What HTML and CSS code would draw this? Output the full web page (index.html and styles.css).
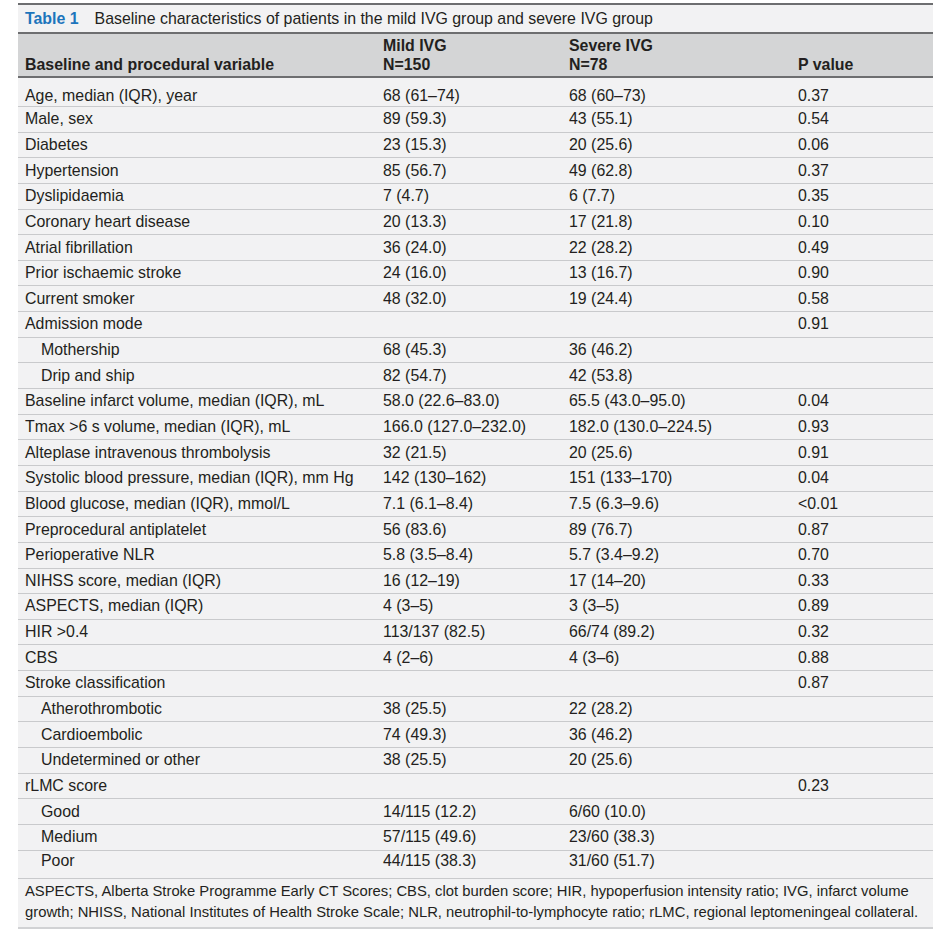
FILE: index.html
```html
<!DOCTYPE html>
<html lang="en">
<head>
<meta charset="utf-8">
<title>Table 1</title>
<link rel="stylesheet" href="styles.css">
</head>
<body>
<div class="table-wrap">
  <div class="caption"><span class="label">Table 1</span><span class="caption-text">Baseline characteristics of patients in the mild IVG group and severe IVG group</span></div>
  <table class="data">
    <colgroup>
      <col class="c1"><col class="c2"><col class="c3"><col class="c4">
    </colgroup>
    <thead>
      <tr>
        <th>Baseline and procedural variable</th>
        <th>Mild IVG<br>N=150</th>
        <th>Severe IVG<br>N=78</th>
        <th>P value</th>
      </tr>
    </thead>
    <tbody>
      <tr class="first"><td>Age, median (IQR), year</td><td>68 (61–74)</td><td>68 (60–73)</td><td>0.37</td></tr>
      <tr><td>Male, sex</td><td>89 (59.3)</td><td>43 (55.1)</td><td>0.54</td></tr>
      <tr><td>Diabetes</td><td>23 (15.3)</td><td>20 (25.6)</td><td>0.06</td></tr>
      <tr><td>Hypertension</td><td>85 (56.7)</td><td>49 (62.8)</td><td>0.37</td></tr>
      <tr><td>Dyslipidaemia</td><td>7 (4.7)</td><td>6 (7.7)</td><td>0.35</td></tr>
      <tr><td>Coronary heart disease</td><td>20 (13.3)</td><td>17 (21.8)</td><td>0.10</td></tr>
      <tr><td>Atrial fibrillation</td><td>36 (24.0)</td><td>22 (28.2)</td><td>0.49</td></tr>
      <tr><td>Prior ischaemic stroke</td><td>24 (16.0)</td><td>13 (16.7)</td><td>0.90</td></tr>
      <tr><td>Current smoker</td><td>48 (32.0)</td><td>19 (24.4)</td><td>0.58</td></tr>
      <tr><td>Admission mode</td><td></td><td></td><td>0.91</td></tr>
      <tr><td class="sub">Mothership</td><td>68 (45.3)</td><td>36 (46.2)</td><td></td></tr>
      <tr><td class="sub">Drip and ship</td><td>82 (54.7)</td><td>42 (53.8)</td><td></td></tr>
      <tr><td>Baseline infarct volume, median (IQR), mL</td><td>58.0 (22.6–83.0)</td><td>65.5 (43.0–95.0)</td><td>0.04</td></tr>
      <tr><td>Tmax &gt;6 s volume, median (IQR), mL</td><td>166.0 (127.0–232.0)</td><td>182.0 (130.0–224.5)</td><td>0.93</td></tr>
      <tr><td>Alteplase intravenous thrombolysis</td><td>32 (21.5)</td><td>20 (25.6)</td><td>0.91</td></tr>
      <tr><td>Systolic blood pressure, median (IQR), mm Hg</td><td>142 (130–162)</td><td>151 (133–170)</td><td>0.04</td></tr>
      <tr><td>Blood glucose, median (IQR), mmol/L</td><td>7.1 (6.1–8.4)</td><td>7.5 (6.3–9.6)</td><td>&lt;0.01</td></tr>
      <tr><td>Preprocedural antiplatelet</td><td>56 (83.6)</td><td>89 (76.7)</td><td>0.87</td></tr>
      <tr><td>Perioperative NLR</td><td>5.8 (3.5–8.4)</td><td>5.7 (3.4–9.2)</td><td>0.70</td></tr>
      <tr><td>NIHSS score, median (IQR)</td><td>16 (12–19)</td><td>17 (14–20)</td><td>0.33</td></tr>
      <tr><td>ASPECTS, median (IQR)</td><td>4 (3–5)</td><td>3 (3–5)</td><td>0.89</td></tr>
      <tr><td>HIR &gt;0.4</td><td>113/137 (82.5)</td><td>66/74 (89.2)</td><td>0.32</td></tr>
      <tr><td>CBS</td><td>4 (2–6)</td><td>4 (3–6)</td><td>0.88</td></tr>
      <tr><td>Stroke classification</td><td></td><td></td><td>0.87</td></tr>
      <tr><td class="sub">Atherothrombotic</td><td>38 (25.5)</td><td>22 (28.2)</td><td></td></tr>
      <tr><td class="sub">Cardioembolic</td><td>74 (49.3)</td><td>36 (46.2)</td><td></td></tr>
      <tr><td class="sub">Undetermined or other</td><td>38 (25.5)</td><td>20 (25.6)</td><td></td></tr>
      <tr><td>rLMC score</td><td></td><td></td><td>0.23</td></tr>
      <tr><td class="sub">Good</td><td>14/115 (12.2)</td><td>6/60 (10.0)</td><td></td></tr>
      <tr><td class="sub">Medium</td><td>57/115 (49.6)</td><td>23/60 (38.3)</td><td></td></tr>
      <tr class="last"><td class="sub">Poor</td><td>44/115 (38.3)</td><td>31/60 (51.7)</td><td></td></tr>
    </tbody>
  </table>
  <div class="footnote">ASPECTS, Alberta Stroke Programme Early CT Scores; CBS, clot burden score; HIR, hypoperfusion intensity ratio; IVG, infarct volume<br>growth; NHISS, National Institutes of Health Stroke Scale; NLR, neutrophil-to-lymphocyte ratio; rLMC, regional leptomeningeal collateral.</div>
</div>
</body>
</html>
```

FILE: styles.css
```css
html, body {
  margin: 0;
  padding: 0;
  background: #ffffff;
}

body {
  font-family: "Liberation Sans", Arial, Helvetica, sans-serif;
  color: #231f20;
}

.table-wrap {
  margin: 3px 0 0 18px;
  width: 915px;
  background: #f2f2f3;
  border-top: 2px solid #6d6e70;
  border-bottom: 2px solid #d1d2d4;
}

.caption {
  height: 27px;
  padding-left: 7px;
  font-size: 15.9px;
  line-height: 27px;
  white-space: nowrap;
}

.caption .label {
  color: #1c75bc;
  font-weight: bold;
  margin-right: 16px;
}

.data {
  width: 100%;
  border-collapse: collapse;
  table-layout: fixed;
  font-size: 15.9px;
}

.data col.c1 { width: 358px; }
.data col.c2 { width: 186px; }
.data col.c3 { width: 229px; }
.data col.c4 { width: 142px; }

.data thead tr {
  background: #d4d5d6;
  border-top: 2px solid #6d6e70;
  border-bottom: 2px solid #6d6e70;
}

.data th {
  text-align: left;
  vertical-align: bottom;
  font-weight: bold;
  line-height: 19px;
  padding: 2px 0 2px 7px;
  white-space: nowrap;
}

.data td {
  height: 24.65px;
  padding: 0 0 0 7px;
  line-height: 20px;
  vertical-align: middle;
  white-space: nowrap;
}

.data tbody tr {
  border-top: 1px solid #c9cacc;
}

.data tbody tr.first {
  border-top: none;
}

.data tbody tr.first td {
  height: 20px;
  padding-top: 8px;
}

.data tbody tr.last td {
  height: 20px;
  padding-bottom: 7px;
}

.data tbody tr.last {
  border-bottom: 1px solid #c9cacc;
}

.data td.sub {
  padding-left: 23px;
}

.footnote {
  padding: 2px 0 4px 7px;
  font-size: 14.8px;
  line-height: 21px;
  white-space: nowrap;
}
```
